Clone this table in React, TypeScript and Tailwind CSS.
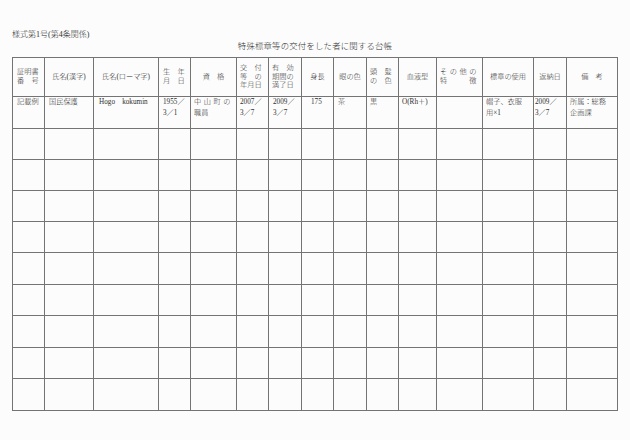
import React from 'react';

const font = 'font-["Liberation_Serif","Noto_Sans_CJK_JP",serif]';

type Head = { lines: string[]; cls: string };

// multi-line headings use ideographic spaces so every line has the same width
const headers: Head[] = [
  { lines: ['証明書', '番　号'], cls: 'pl-[4px]' },
  { lines: ['氏名(漢字)'], cls: 'items-center' },
  { lines: ['氏名(ローマ字)'], cls: 'items-center' },
  { lines: ['生　年', '月　日'], cls: 'pl-[4px]' },
  { lines: ['資　格'], cls: 'items-center' },
  { lines: ['交　付', '等　の', '年月日'], cls: 'pl-[3px]' },
  { lines: ['有　効', '期間の', '満了日'], cls: 'pl-[3px]' },
  { lines: ['身長'], cls: 'items-center' },
  { lines: ['眼の色'], cls: 'items-center' },
  { lines: ['頭　髪', 'の　色'], cls: 'pl-[3px]' },
  { lines: ['血液型'], cls: 'items-center' },
  { lines: ['その他の', '特　　徴'], cls: 'pl-[3px] tracking-[2.6px]' },
  { lines: ['標章の使用'], cls: 'items-center' },
  { lines: ['返納日'], cls: 'items-center' },
  { lines: ['備　考'], cls: 'items-center' },
];

type Cell = { lines: string[]; cls?: string; firstCls?: string };

const sample: Cell[] = [
  { lines: ['記載例'], cls: 'pl-[4px]' },
  { lines: ['国民保護'], cls: 'pl-[4px]' },
  { lines: ['Hogo　kokumin'], cls: 'pl-[5px]' },
  { lines: ['1955／', '3／1'], cls: 'pl-[4px]' },
  { lines: ['中山町の', '職員'], cls: 'pl-[3px]', firstCls: 'tracking-[2.6px]' },
  { lines: ['2007／', '3／7'], cls: 'pl-[3px]' },
  { lines: ['2009／', '3／7'], cls: 'pl-[4px]' },
  { lines: ['175'], cls: 'pl-[9px]' },
  { lines: ['茶'], cls: 'pl-[4px]' },
  { lines: ['黒'], cls: 'pl-[3px]' },
  { lines: ['O(Rh＋)'], cls: 'pl-[3px]' },
  { lines: [] },
  { lines: ['帽子、衣服', '用×1'], cls: 'pl-[3px]' },
  { lines: ['2009／', '3／7'], cls: 'pl-[1px]' },
  { lines: ['所属：総務', '企画課'], cls: 'pl-[3px]' },
];

export default function App() {
  return (
    <div className={`w-[630px] h-[440px] bg-[#fcfcfc] text-[#2f2f2f] font-light pl-[12px] pt-[30px] ${font}`}>
      <div className="text-[8px] leading-[10px]">様式第1号(第4条関係)</div>
      <div className="mt-[1.5px] w-[606px] text-center text-[8.4px] leading-[10px] tracking-[0.2px]">特殊標章等の交付をした者に関する台帳</div>

      <div className="mt-[5.5px] grid w-fit grid-cols-[31px_48px_64px_31px_45px_31px_32px_31px_32px_31px_37px_45px_50px_32px_50px] grid-rows-[38px_31px_30px_30px_30px_30px_31px_30px_31px_30px_31px] gap-px bg-[#747474] p-px text-[7.2px]">
        {headers.map((h, i) => (
          <div key={'h' + i} className={`flex flex-col justify-center bg-[#fcfcfc] leading-[8.6px] whitespace-nowrap overflow-hidden ${h.cls}`}>
            {h.lines.map((l, j) => (
              <div key={j}>{l}</div>
            ))}
          </div>
        ))}

        {sample.map((c, i) => (
          <div key={'s' + i} className={`bg-[#fcfcfc] leading-[11px] whitespace-nowrap overflow-hidden ${c.cls ?? ''}`}>
            {c.lines.map((l, j) => (
              <div key={j} className={j === 0 ? c.firstCls ?? '' : ''}>{l}</div>
            ))}
          </div>
        ))}

        {Array.from({ length: 9 * 15 }).map((_, i) => (
          <div key={'e' + i} className="bg-[#fcfcfc]" />
        ))}
      </div>
    </div>
  );
}
